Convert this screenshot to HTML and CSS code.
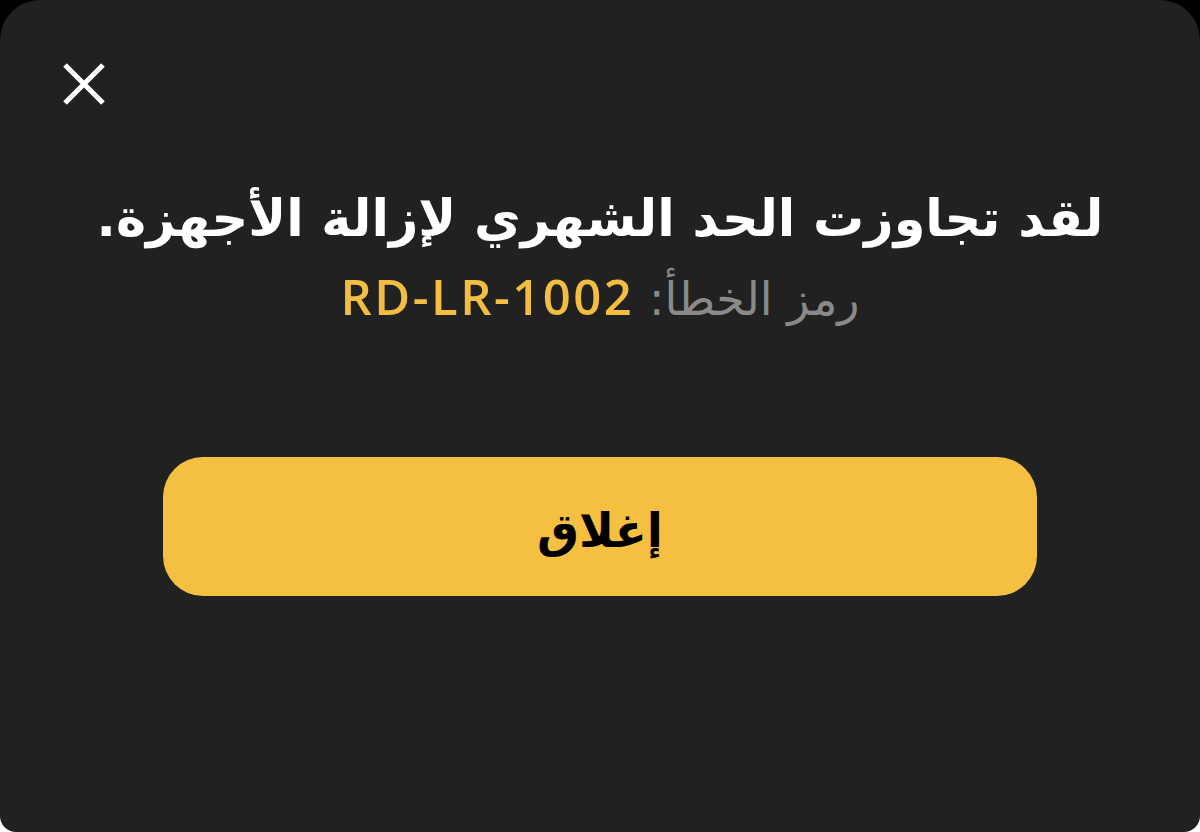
FILE: index.html
```html
<!DOCTYPE html>
<html lang="ar" dir="rtl">
<head>
<meta charset="utf-8">
<link rel="stylesheet" href="styles.css">
</head>
<body>
<div class="card">
  <div class="top">
    <button class="close" aria-label="close">
      <svg width="44" height="44" viewBox="0 0 44 44"><path d="M3 3 L41 41 M41 3 L3 41" stroke="#fff" stroke-width="5" stroke-linecap="butt" fill="none"/></svg>
    </button>
  </div>
  <h1 class="title">لقد تجاوزت الحد الشهري لإزالة الأجهزة.</h1>
  <p class="code"><span class="label">رمز الخطأ:</span> <span class="value">RD-LR-1002</span></p>
  <div class="actions">
    <button class="btn">إغلاق</button>
  </div>
</div>
</body>
</html>
```
FILE: styles.css
```css
html, body {
  margin: 0;
  padding: 0;
  width: 1200px;
  height: 832px;
  background: linear-gradient(to bottom, #000 0, #000 50%, #fff 50%, #fff 100%);
  overflow: hidden;
}
.card {
  width: 1200px;
  height: 832px;
  box-sizing: border-box;
  background: #212121;
  border-radius: 40px 40px 16px 16px;
  display: flex;
  flex-direction: column;
  align-items: center;
  font-family: "DejaVu Sans", sans-serif;
}
.top {
  align-self: stretch;
  display: flex;
  justify-content: flex-end;
  padding: 62px 0 0 62px;
}
.close {
  background: none;
  border: 0;
  padding: 0;
  width: 44px;
  height: 44px;
  display: block;
  cursor: pointer;
}
.title {
  margin: 78px 0 0;
  color: #fff;
  font-size: 51px;
  font-weight: bold;
  line-height: 70px;
  text-align: center;
}
.code {
  margin: 12px 0 0;
  font-size: 46px;
  line-height: 60px;
  text-align: center;
}
.label { color: #8a8a8a; }
.value {
  color: #f2bd41;
  font-family: "Open Sans", sans-serif;
  font-weight: 600;
  font-size: 49px;
  letter-spacing: 2.5px;
}
.actions {
  margin-top: 128px;
  display: flex;
  justify-content: center;
}
.btn {
  width: 874px;
  height: 139px;
  background: #f5bf42;
  border: 0;
  border-radius: 40px;
  color: #000;
  font-family: "DejaVu Sans", sans-serif;
  font-weight: bold;
  font-size: 47px;
  padding-top: 8px;
  cursor: pointer;
}
```
